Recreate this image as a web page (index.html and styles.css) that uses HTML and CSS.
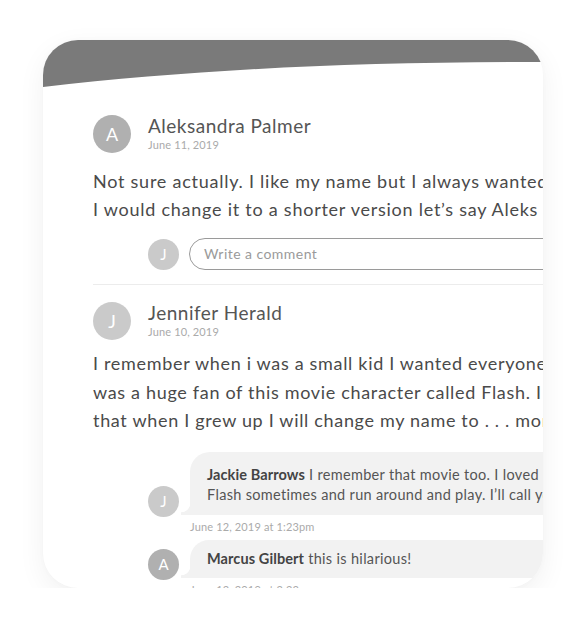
FILE: index.html
```html
<!DOCTYPE html>
<html lang="en">
<head>
<meta charset="utf-8">
<title>Comments</title>
<link rel="stylesheet" href="styles.css">
</head>
<body>
<div class="card">
  <svg class="header" width="500" height="47" viewBox="0 0 500 47" aria-hidden="true">
    <path d="M0 0 H500 V22 C300 22 150 30 0 47 Z" fill="#7a7a7a"/>
  </svg>
  <div class="content">
    <div class="comment first">
      <div class="head">
        <div class="avatar big dark">A</div>
        <div class="meta">
          <div class="name">Aleksandra Palmer</div>
          <div class="date">June 11, 2019</div>
        </div>
      </div>
      <p class="text">Not sure actually. I like my name but I always wanted to change it, maybe<br>I would change it to a shorter version let’s say Aleks or something.</p>
      <div class="write">
        <div class="avatar small light">J</div>
        <div class="input">Write a comment</div>
      </div>
    </div>
    <div class="comment second">
      <div class="head">
        <div class="avatar big light">J</div>
        <div class="meta">
          <div class="name">Jennifer Herald</div>
          <div class="date">June 10, 2019</div>
        </div>
      </div>
      <p class="text">I remember when i was a small kid I wanted everyone to call me Flash, I<br>was a huge fan of this movie character called Flash. I even told my mom<br>that when I grew up I will change my name to . . . mom laughed so hard.</p>
      <div class="replies">
        <div class="reply">
          <div class="avatar small light">J</div>
          <div class="reply-body">
            <div class="bubble"><b>Jackie Barrows</b> I remember that movie too. I loved it so much, I used to pretend to be<br>Flash sometimes and run around and play. I’ll call you Flash from now on.</div>
            <div class="stamp">June 12, 2019 at 1:23pm</div>
          </div>
        </div>
        <div class="reply">
          <div class="avatar small dark">A</div>
          <div class="reply-body">
            <div class="bubble"><b>Marcus Gilbert</b> this is hilarious!</div>
            <div class="stamp">June 12, 2019 at 2:23pm</div>
          </div>
        </div>
      </div>
    </div>
  </div>
</div>
</body>
</html>
```
FILE: styles.css
```css
* { box-sizing: border-box; }
html, body { margin: 0; background: #fff; }
body {
  padding: 40px 0 0 43px;
  font-family: Lato, "Noto Sans", sans-serif;
  color: #4a4a4a;
}
.card {
  width: 500px;
  height: 548px;
  border-radius: 35px;
  overflow: hidden;
  background: #fff;
  box-shadow: 0 8px 28px rgba(0, 0, 0, 0.06), 0 0 6px rgba(0, 0, 0, 0.02);
}
.header { display: block; }
.content {
  width: 640px;
  padding: 28px 0 0 50px;
}
.head {
  display: flex;
  align-items: center;
  gap: 17px;
}
.avatar {
  flex-shrink: 0;
  border-radius: 50%;
  color: #fff;
  display: flex;
  align-items: center;
  justify-content: center;
}
.avatar.big { width: 38px; height: 38px; font-size: 18px; }
.avatar.small { width: 31px; height: 31px; font-size: 15px; }
.avatar.dark { background: #b0b0b0; }
.avatar.light { background: #cacaca; }
.meta { display: flex; flex-direction: column; margin-top: -3px; }
.name { font-size: 19px; line-height: 24px; color: #555; letter-spacing: 0.5px; }
.date { font-size: 11px; line-height: 14px; color: #aaa; letter-spacing: 0.15px; }
.text {
  margin: 15px 0 0;
  font-size: 18px;
  line-height: 27.5px;
  color: #4a4a4a;
  letter-spacing: 0.75px;
  white-space: nowrap;
}
.second .text { margin-top: 9px; line-height: 28.5px; letter-spacing: 0.68px; }
.write {
  display: flex;
  align-items: center;
  gap: 10px;
  margin: 15px 0 0 55px;
  padding-bottom: 14px;
}
.input {
  width: 420px;
  height: 32px;
  border: 1px solid #9a9a9a;
  border-radius: 16px;
  padding-left: 14px;
  font-size: 14px;
  line-height: 30px;
  color: #9a9a9a;
  letter-spacing: 0.45px;
}
.second {
  border-top: 1px solid #ececec;
  padding-top: 17px;
}
.replies {
  margin: 17px 0 0 55px;
  display: flex;
  flex-direction: column;
  gap: 6px;
}
.reply {
  display: flex;
  align-items: flex-end;
  gap: 11px;
}
.reply .avatar { margin-bottom: 17px; }
.reply-body { display: flex; flex-direction: column; }
.bubble {
  position: relative;
  width: 520px;
  background: #f2f2f2;
  border-radius: 20px 20px 20px 0;
  padding: 13px 0 10px 17px;
  font-size: 14.5px;
  line-height: 20px;
  color: #555;
  letter-spacing: 0.32px;
  white-space: nowrap;
}
.bubble b { color: #444; font-weight: 700; letter-spacing: 0.1px; }
.bubble::before {
  content: "";
  position: absolute;
  left: -9px;
  bottom: 0;
  width: 9px;
  height: 12px;
  background: radial-gradient(circle at 0 0, transparent 9px, #f2f2f2 9.6px);
}
.reply + .reply .bubble { padding: 9px 0 9px 17px; }
.stamp {
  margin-top: 5px;
  font-size: 11px;
  line-height: 14px;
  color: #aaa;
  letter-spacing: 0.15px;
}
```
